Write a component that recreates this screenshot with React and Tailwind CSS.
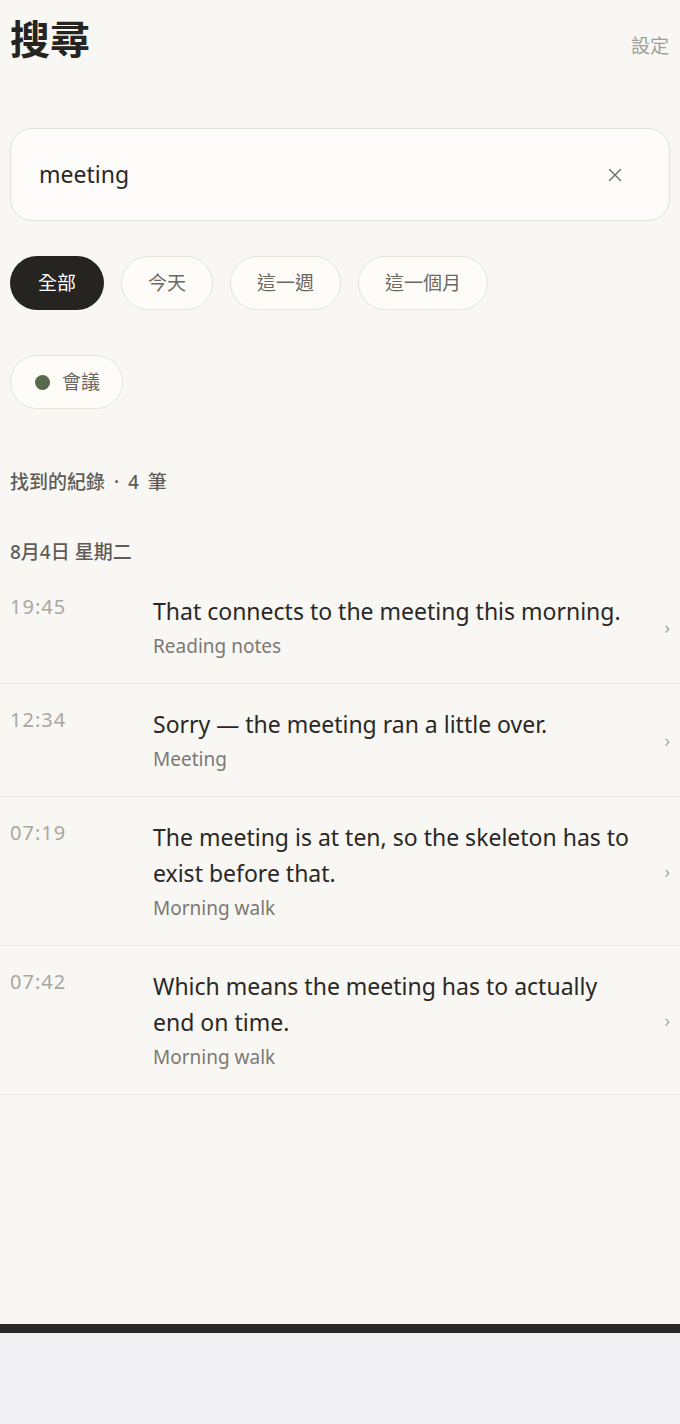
import React from "react";

const filters = ["全部", "今天", "這一週", "這一個月"];

const results = [
  { id: 1, time: "19:45", text: "That connects to the meeting this morning.", source: "Reading notes" },
  { id: 2, time: "12:34", text: "Sorry — the meeting ran a little over.", source: "Meeting" },
  { id: 3, time: "07:19", text: "The meeting is at ten, so the skeleton has to exist before that.", source: "Morning walk" },
  { id: 4, time: "07:42", text: "Which means the meeting has to actually end on time.", source: "Morning walk" },
];

const font = "font-['Noto_Sans','Noto_Sans_CJK_TC',sans-serif]";

const App = () => {
  return (
    <div className={`w-[680px] ${font}`}>
      <div className="min-h-[1324px] bg-[#f8f7f3] pb-10">
        {/* header */}
        <div className="flex items-start justify-between px-[10px] pt-[13px]">
          <h1 className="text-[40px] font-bold leading-[52px] text-[#262420]">搜尋</h1>
          <button className="mt-[19px] pr-[1px] text-[19px] leading-[28px] text-[#a19e99]">設定</button>
        </div>

        {/* search box */}
        <div className="mx-[10px] mt-[63px] flex h-[93px] items-center rounded-[22px] border border-[#e3e0da] bg-[#fdfcfa] pl-[28px] pr-[47px]">
          <span className="flex-1 text-[23px] text-[#2a2826]">meeting</span>
          <svg width="14" height="14" viewBox="0 0 14 14" fill="none" stroke="#6f6c68" strokeWidth="1.4" strokeLinecap="round">
            <path d="M1.5 1.5l11 11M12.5 1.5l-11 11" />
          </svg>
        </div>

        {/* date filters */}
        <div className="mt-[35px] flex gap-[17px] px-[10px]">
          {filters.map((f, i) => (
            <button
              key={f}
              className={
                i === 0
                  ? "h-[54px] rounded-full bg-[#262420] px-[28px] text-[19px] text-white"
                  : "h-[54px] rounded-full border border-[#e6e3dd] bg-[#fdfcf9] px-[26px] text-[19px] text-[#6b6863]"
              }
            >
              {f}
            </button>
          ))}
        </div>

        {/* tag filter */}
        <div className="mt-[45px] px-[10px]">
          <button className="flex h-[54px] items-center gap-[12px] rounded-full border border-[#e6e3dd] bg-[#fdfcf9] pl-[24px] pr-[22px] text-[19px] text-[#6b6863]">
            <span className="h-[15px] w-[15px] rounded-full bg-[#56694b]" />
            會議
          </button>
        </div>

        <div className="mt-[60px] px-[10px] text-[19px] font-medium leading-[26px] text-[#5f5c58] [word-spacing:4px]">
          找到的紀錄 · 4 筆
        </div>

        <div className="mt-[44px] px-[10px] text-[19px] font-medium leading-[26px] text-[#5f5c58]">
          8月4日 星期二
        </div>

        {/* results */}
        <div className="mt-[6px]">
          {results.map((r) => (
            <div key={r.id} className="flex items-center border-b border-[#ebe9e4] pl-[10px] pr-[10px]">
              <div className="flex flex-1 pt-[22px] pb-[24px]">
                <div className="w-[143px] shrink-0 pt-[1px] text-[20px] leading-[26px] tracking-[1px] text-[#aaa7a2]">{r.time}</div>
                <div className="w-[488px]">
                  <div className="text-[23px] leading-[36px] text-[#2a2826]">{r.text}</div>
                  <div className="mt-[4px] text-[19px] leading-[26px] text-[#7c7974]">{r.source}</div>
                </div>
              </div>
              <span className="text-[18px] leading-none text-[#a8a5a0]">›</span>
            </div>
          ))}
        </div>
      </div>
      <div className="h-[9px] bg-[#2a2826]" />
      <div className="h-[91px] bg-[#f0eff2]" />
    </div>
  );
};

export default App;
